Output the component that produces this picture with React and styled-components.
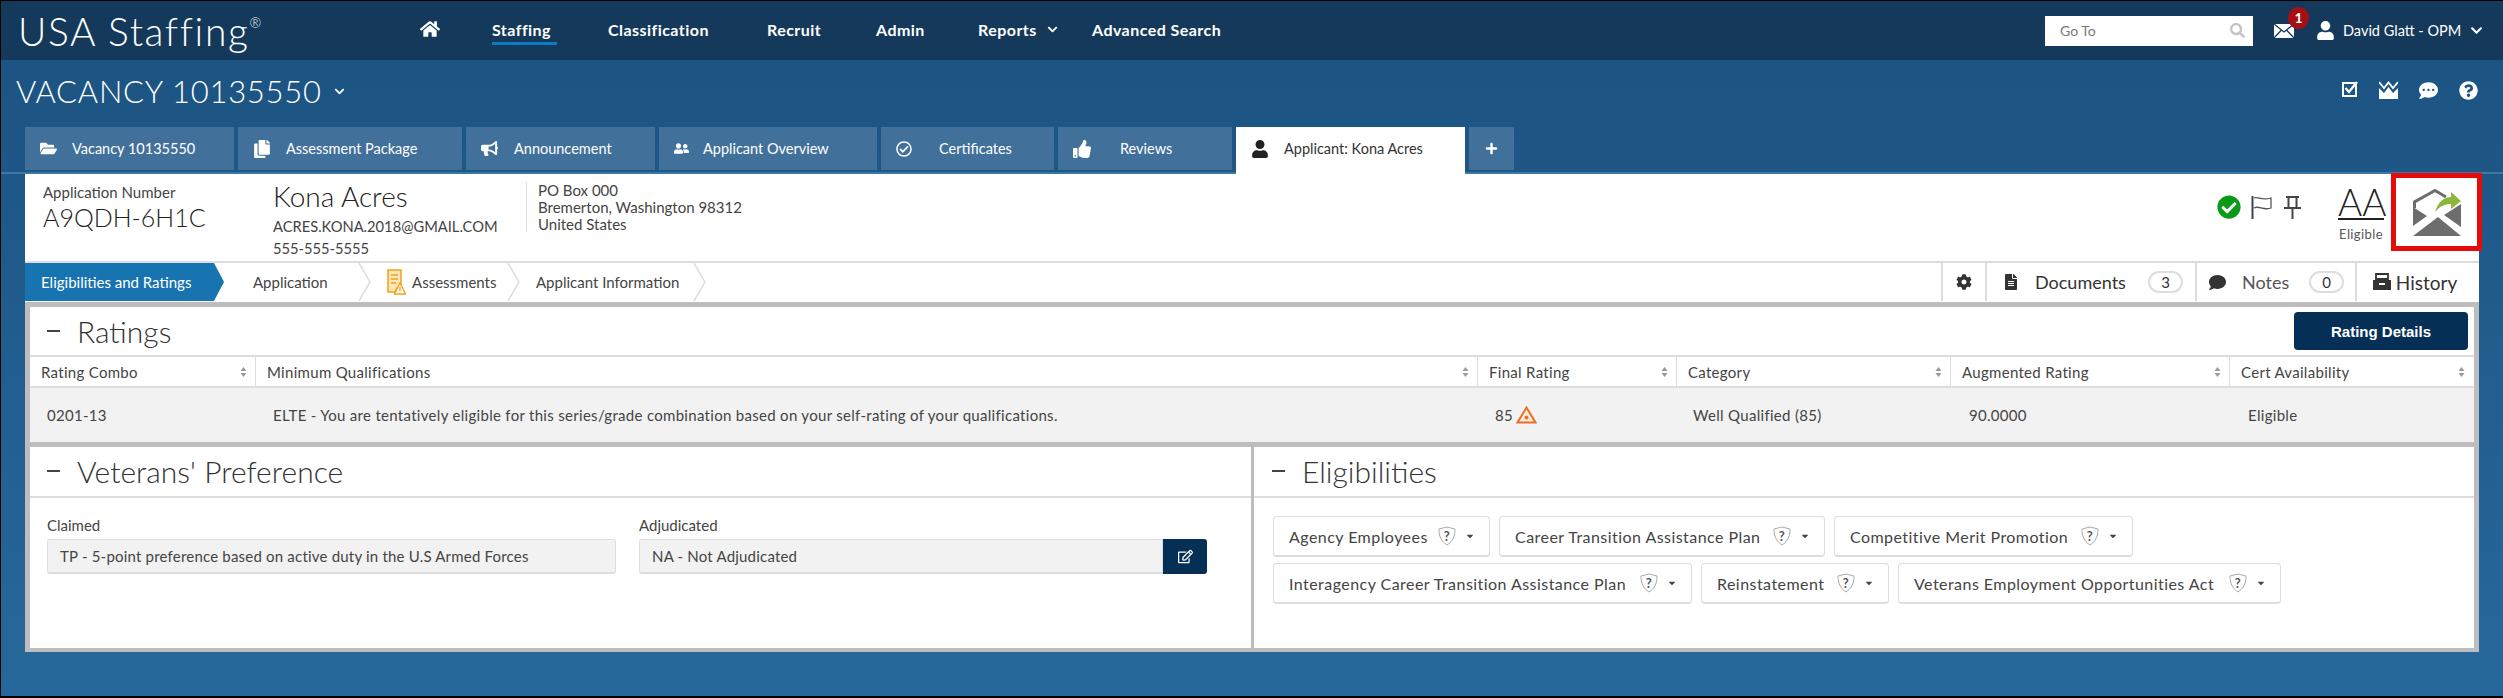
import React from 'react';
import styled, { createGlobalStyle } from 'styled-components';
import {
  FaHome, FaFolderOpen, FaCopy, FaBullhorn, FaUserFriends, FaThumbsUp, FaUser, FaPlus, FaCog,
  FaFileAlt, FaComment, FaCheckCircle, FaQuestionCircle, FaCommentDots,
  FaChevronDown, FaSearch, FaRegCheckCircle, FaCaretDown, FaRegEdit,
} from 'react-icons/fa';

const font = '"Lato", "Noto Sans", sans-serif';

const GlobalStyle = createGlobalStyle`
  html, body {
    margin: 0;
    padding: 0;
    background: #000;
    overflow: hidden;
  }
  * {
    box-sizing: border-box;
  }
`;

const Page = styled.div`
  width: 2503px;
  height: 698px;
  border-top: 1px solid #000;
  border-left: 1px solid #000;
  border-bottom: 2px solid #000;
  background: linear-gradient(180deg, #1b5280 0%, #27689b 100%);
  font-family: ${font};
  color: #333;
  display: flex;
  flex-direction: column;
  overflow: hidden;
`;

const TopBar = styled.header`
  height: 59px;
  flex: none;
  display: flex;
  align-items: center;
  background: #14395a;
  color: #fff;
`;

const Logo = styled.div`
  width: 419px;
  padding-left: 17px;
  font-size: 39px;
  font-weight: 300;
  letter-spacing: 1.6px;
  white-space: nowrap;
  sup {
    font-size: 14px;
    vertical-align: 18px;
    letter-spacing: 0;
  }
`;

const Nav = styled.nav`
  display: flex;
  align-items: center;
`;

const NavLink = styled.a`
  width: ${(p) => p.$w}px;
  margin-right: ${(p) => p.$mr || 0}px;
  height: 28px;
  font-size: 16px;
  font-weight: 700;
  letter-spacing: 0.45px;
  white-space: nowrap;
  display: flex;
  align-items: center;
  gap: 10px;
  color: #fff;
  border-bottom: ${(p) => (p.$active ? '3px solid #0a7dc0' : '3px solid transparent')};
  svg {
    flex: none;
  }
`;

const UserArea = styled.div`
  margin-left: auto;
  display: flex;
  align-items: center;
`;

const GoTo = styled.div`
  width: 208px;
  height: 30px;
  margin-right: 21px;
  padding: 0 8px 0 15px;
  background: #fff;
  color: #777;
  font-size: 14px;
  display: flex;
  align-items: center;
  justify-content: space-between;
`;

const Mail = styled.div`
  position: relative;
  width: 42px;
  height: 20px;
  display: flex;
  align-items: center;
`;

const Badge = styled.span`
  position: absolute;
  left: 14px;
  top: -14px;
  width: 21px;
  height: 22px;
  border-radius: 50%;
  background: #a40f13;
  color: #fff;
  font-size: 14px;
  font-weight: 700;
  display: flex;
  align-items: center;
  justify-content: center;
`;

const UserName = styled.div`
  width: 127px;
  margin-left: 8px;
  font-size: 14.5px;
  white-space: nowrap;
`;

const UserCaret = styled.div`
  width: 33px;
  display: flex;
`;

const TitleRow = styled.div`
  height: 67px;
  flex: none;
  padding: 0 25px 0 15px;
  display: flex;
  align-items: flex-start;
  justify-content: space-between;
  color: #fff;
`;

const Title = styled.h1`
  margin: 12px 0 0;
  font-size: 31px;
  line-height: 38px;
  font-weight: 300;
  letter-spacing: 0.75px;
  display: flex;
  align-items: center;
  gap: 12px;
`;

const QuickIcons = styled.div`
  display: flex;
  gap: 21px;
  margin-top: 21px;
  svg {
    display: block;
  }
`;

const TabBar = styled.div`
  height: 47px;
  flex: none;
  padding-left: 24px;
  display: flex;
  gap: 4px;
  align-items: flex-start;
  border-bottom: 2px solid #3b78a6;
`;

const Tab = styled.div`
  width: ${(p) => p.$w}px;
  height: ${(p) => (p.$active ? 47 : 43)}px;
  padding-left: ${(p) => (p.$center ? 0 : 15)}px;
  padding-bottom: ${(p) => (p.$active ? 4 : 0)}px;
  background: ${(p) => (p.$active ? '#fff' : '#41719b')};
  color: ${(p) => (p.$active ? '#333' : '#fff')};
  font-size: 14.5px;
  white-space: nowrap;
  display: flex;
  align-items: center;
  justify-content: ${(p) => (p.$center ? 'center' : 'flex-start')};
  svg {
    flex: none;
  }
`;

const TabIcon = styled.span`
  width: ${(p) => p.$w || 32}px;
  display: flex;
  flex: none;
`;

const Sheet = styled.main`
  width: 2454px;
  margin-left: 24px;
  background: #fff;
  display: flex;
  flex-direction: column;
`;

const ApplicantHead = styled.section`
  height: 89px;
  padding-left: 18px;
  border-bottom: 2px solid #ddd;
  display: flex;
`;

const NumberCol = styled.div`
  width: 230px;
  padding-top: 9px;
`;

const SmallLabel = styled.div`
  font-size: 15px;
  line-height: 18px;
  color: #444;
`;

const AppNumber = styled.div`
  font-size: 25px;
  line-height: 30px;
  font-weight: 300;
  margin-top: 1px;
  color: #222;
`;

const PersonCol = styled.div`
  width: 253px;
  padding-top: 6px;
`;

const PersonName = styled.div`
  font-size: 28px;
  line-height: 32px;
  font-weight: 300;
  color: #222;
`;

const PersonLine = styled.div`
  font-size: 14.7px;
  line-height: 22px;
  margin-top: ${(p) => p.$mt || 0}px;
  color: #444;
`;

const AddressCol = styled.div`
  margin-top: 8px;
  height: 50px;
  padding-left: 11px;
  border-left: 1px solid #ddd;
  font-size: 15px;
  line-height: 17px;
  color: #444;
`;

const StatusArea = styled.div`
  margin-left: auto;
  margin-right: -3px;
  display: flex;
  align-items: flex-start;
  color: #444;
`;

const StatusIcons = styled.div`
  display: flex;
  align-items: center;
  gap: 10px;
  margin-top: 21px;
  margin-right: 32px;
`;

const GradeCol = styled.div`
  width: 54px;
  margin-top: 12px;
  margin-right: 3px;
  text-align: center;
`;

const Grade = styled.div`
  font-size: 37px;
  line-height: 32px;
  font-weight: 300;
  border-bottom: 2px solid #222;
  margin: 0 4px;
  color: #222;
`;

const GradeLabel = styled.div`
  font-size: 13px;
  line-height: 16px;
  margin-top: 6px;
  color: #555;
  letter-spacing: 0.4px;
`;

const SendBox = styled.div`
  width: 91px;
  height: 78px;
  margin-top: -1px;
  border: 5px solid #e60b0b;
  display: flex;
  align-items: center;
  justify-content: center;
`;

const StepBar = styled.section`
  height: 38px;
  display: flex;
  align-items: stretch;
`;

const Step = styled.div`
  width: ${(p) => p.$w}px;
  padding-left: ${(p) => p.$pl}px;
  font-size: 15px;
  white-space: nowrap;
  display: flex;
  align-items: center;
  gap: 6px;
  color: ${(p) => (p.$active ? '#fff' : '#444')};
  background: ${(p) => (p.$active ? '#1874b0' : '#fff')};
  clip-path: ${(p) => (p.$active ? 'polygon(0 0, 189px 0, 199px 50%, 189px 100%, 0 100%)' : 'none')};
`;

const StepArrow = styled.svg`
  width: 13px;
  height: 38px;
  flex: none;
  margin-left: -13px;
`;

const RightTools = styled.div`
  margin-left: auto;
  display: flex;
`;

const Tool = styled.div`
  width: ${(p) => p.$w}px;
  padding-left: ${(p) => p.$pl}px;
  border-left: 2px solid #ddd;
  display: flex;
  align-items: center;
  font-size: ${(p) => p.$fs || 18}px;
  color: #333;
  white-space: nowrap;
`;

const ToolLabel = styled.span`
  width: ${(p) => p.$w}px;
  padding-left: 16px;
  color: ${(p) => p.$color || '#333'};
`;

const Count = styled.span`
  width: 35px;
  height: 22px;
  flex: none;
  border: 2px solid #ddd;
  border-radius: 12px;
  font-size: 15px;
  display: flex;
  align-items: center;
  justify-content: center;
  color: #333;
`;

const Content = styled.div`
  background: #bdbdbd;
  margin-top: 1px;
  padding: 5px 5px 4px;
  display: flex;
  flex-direction: column;
  gap: 5px;
`;

const Card = styled.section`
  background: #fff;
`;

const CardHead = styled.div`
  height: ${(p) => p.$h}px;
  padding: 0 ${(p) => p.$pr || 0}px ${(p) => p.$pb || 0}px ${(p) => p.$pl || 17}px;
  border-bottom: 2px solid #ddd;
  display: flex;
  align-items: center;
  justify-content: space-between;
`;

const CardTitle = styled.h2`
  margin: 0;
  font-size: 30px;
  font-weight: 300;
  color: #333;
  display: flex;
  align-items: center;
  white-space: nowrap;
  &::before {
    content: '';
    width: 13px;
    height: 2px;
    margin-right: 17px;
    background: #444;
  }
`;

const DarkButton = styled.button`
  width: 174px;
  height: 38px;
  border: none;
  border-radius: 4px;
  background: #062f55;
  color: #fff;
  font-family: "Liberation Sans", sans-serif;
  font-size: 15px;
  font-weight: 700;
`;

const GridRow = styled.div`
  display: grid;
  grid-template-columns: 225px 1222px 199px 274px 279px 244px;
  height: ${(p) => p.$h}px;
  background: ${(p) => (p.$head ? '#fff' : '#f2f2f2')};
  border-bottom: ${(p) => (p.$head ? '2px solid #ddd' : 'none')};
`;

const HeadCell = styled.div`
  padding: 0 8px 0 11px;
  border-left: ${(p) => (p.$first ? 'none' : '1px solid #ddd')};
  font-size: 15px;
  letter-spacing: 0.3px;
  color: #444;
  display: flex;
  align-items: center;
  justify-content: space-between;
  white-space: nowrap;
`;

const RowCell = styled.div`
  padding-left: ${(p) => p.$pl || 17}px;
  font-size: 15px;
  letter-spacing: 0.3px;
  color: #444;
  display: flex;
  align-items: center;
  gap: 3px;
  white-space: nowrap;
`;

const SortMark = styled.svg`
  width: 7px;
  height: 12px;
  flex: none;
`;

const TwoCards = styled.div`
  display: grid;
  grid-template-columns: 1221px 1fr;
  gap: 3px;
  height: 201px;
`;

const FieldGrid = styled.div`
  padding: 18px 0 0 17px;
  display: grid;
  grid-template-columns: 569px 568px;
  column-gap: 23px;
`;

const FieldLabel = styled.div`
  font-size: 15px;
  line-height: 19px;
  margin-bottom: 4px;
  color: #444;
`;

const ReadBox = styled.div`
  height: 35px;
  padding-left: 12px;
  background: #f2f2f2;
  border: 1px solid #ddd;
  border-bottom-width: 2px;
  border-radius: 3px;
  font-size: 15px;
  letter-spacing: 0.2px;
  color: #444;
  display: flex;
  align-items: center;
  white-space: nowrap;
`;

const InputGroup = styled.div`
  display: flex;
  ${ReadBox} {
    flex: 1;
    border-radius: 3px 0 0 3px;
  }
`;

const EditButton = styled.div`
  width: 44px;
  height: 35px;
  background: #062f55;
  border-radius: 0 3px 3px 0;
  color: #fff;
  display: flex;
  align-items: center;
  justify-content: center;
`;

const ChipArea = styled.div`
  padding: 18px 0 0 19px;
  display: flex;
  flex-direction: column;
  gap: 6px;
`;

const ChipRow = styled.div`
  display: flex;
  gap: 9px;
`;

const Chip = styled.div`
  width: ${(p) => p.$w}px;
  height: 41px;
  padding-left: 15px;
  border: 1px solid #ddd;
  border-bottom-width: 2px;
  border-radius: 4px;
  font-size: 16px;
  letter-spacing: 0.45px;
  color: #444;
  display: flex;
  align-items: center;
  white-space: nowrap;
`;

const ChipText = styled.span`
  flex: 1;
`;

const ChipIcons = styled.span`
  display: flex;
  align-items: center;
  gap: 9px;
  margin-right: 14px;
`;

function SortIcon() {
  return (
    <SortMark viewBox="0 0 7 12">
      <path d="M3.5 1 L6.5 5 H0.5 Z M3.5 11 L0.5 7 H6.5 Z" fill="#999" />
    </SortMark>
  );
}

function ShieldIcon() {
  return (
    <svg width="18" height="20" viewBox="0 0 18 20">
      <path d="M9 1 L17 3 C17 10 15 15 9 19 C3 15 1 10 1 3 Z" fill="none" stroke="#aaa" />
      <text x="9" y="14.5" fontSize="13" fontWeight="700" textAnchor="middle" fill="#555" fontFamily={font}>?</text>
    </svg>
  );
}

function Arrow() {
  return (
    <StepArrow viewBox="0 0 13 38">
      <path d="M1 0 L12 19 L1 38" fill="none" stroke="#ddd" strokeWidth="1.5" />
    </StepArrow>
  );
}

function AssessIcon() {
  return (
    <svg width="19" height="26" viewBox="0 0 19 26">
      <path d="M1 1 H14 V19 H10 L8 23 H1 Z" fill="#fbe6b4" stroke="#f0a21e" strokeWidth="1.5" />
      <path d="M4 6 H11 M4 10 H11 M4 14 H9" stroke="#f0a21e" strokeWidth="1.6" />
      <path d="M13 14 L18.5 25 H7.5 Z" fill="#fff" stroke="#f0a21e" strokeWidth="1.4" />
      <path d="M13 18 V22" stroke="#f0a21e" strokeWidth="1.4" />
    </svg>
  );
}

function WarnIcon() {
  return (
    <svg width="21" height="18" viewBox="0 0 21 18">
      <path d="M10.5 1.5 L19.5 16.5 H1.5 Z" fill="#fce9d8" stroke="#e8702a" strokeWidth="2" />
      <circle cx="10.5" cy="11.5" r="2" fill="#e8702a" />
    </svg>
  );
}

function OpenMailIcon() {
  return (
    <svg width="48" height="47" viewBox="0 0 48 47">
      <path d="M1.5 19 V13 L22 1.5 L33 8" fill="none" stroke="#6d6d6d" strokeWidth="3" />
      <path d="M0 18 V37 L14 27 Z M48 15 V38 L31 26 Z" fill="#6d6d6d" />
      <path d="M0 47 L25 28 L48 47 Z" fill="#6d6d6d" />
      <path d="M22 23 C25 13 31 8 38 8 V3 L48 12 L38 20 V15 C32 15 27 17 22 23 Z" fill="#8cb63c" />
    </svg>
  );
}

function MailIcon() {
  return (
    <svg width="20" height="14" viewBox="0 0 20 14">
      <rect width="20" height="14" fill="#fff" />
      <path d="M0 0 L10 8 L20 0 M0 14 L7.5 6 M20 14 L12.5 6" fill="none" stroke="#14395a" strokeWidth="1.3" />
    </svg>
  );
}

function CrownIcon() {
  return (
    <svg width="19" height="18" viewBox="0 0 19 18">
      <path d="M0 7 L5 12 L9.5 6 L14 12 L19 7 V18 H0 Z" fill="#fff" />
      <path d="M0 1 L5 7 L9.5 1.5 L14 7 L19 1" fill="none" stroke="#fff" strokeWidth="1.8" />
    </svg>
  );
}

function FlagIcon() {
  return (
    <svg width="22" height="23" viewBox="0 0 22 23">
      <path d="M1.5 0 V23" stroke="#345" strokeWidth="2" />
      <path d="M3 2 C7 0 10 5 20 2 V12 C12 15 8 9 3 12" fill="none" stroke="#555" strokeWidth="1.3" />
    </svg>
  );
}

function PinIcon() {
  return (
    <svg width="19" height="23" viewBox="0 0 19 23">
      <path d="M3 1 H16 M5.5 1 V11 M13.5 1 V11 M1 12 H18 M9.5 12 V23" fill="none" stroke="#444" strokeWidth="2" />
    </svg>
  );
}

function HistoryIcon() {
  return (
    <svg width="18" height="18" viewBox="0 0 18 18">
      <path d="M3 1 H15 V6 H3 Z" fill="none" stroke="#333" strokeWidth="1.8" />
      <path d="M0 7 H18 V17 H0 Z" fill="#333" />
      <rect x="6" y="10" width="6" height="2" fill="#fff" />
    </svg>
  );
}

function CheckSquareIcon() {
  return (
    <svg width="16" height="16" viewBox="0 0 16 16">
      <rect x="1" y="2" width="13" height="13" fill="none" stroke="#fff" strokeWidth="2" />
      <path d="M3.5 7 L7 11 L15 1" fill="none" stroke="#fff" strokeWidth="2.4" />
    </svg>
  );
}

const tabs = [
  { label: 'Vacancy 10135550', w: 209, icon: <FaFolderOpen size={17} /> },
  { label: 'Assessment Package', w: 224, icon: <FaCopy size={18} />, iw: 33 },
  { label: 'Announcement', w: 189, icon: <FaBullhorn size={17} />, iw: 33 },
  { label: 'Applicant Overview', w: 218, icon: <FaUserFriends size={15} />, iw: 29 },
  { label: 'Certificates', w: 173, icon: <FaRegCheckCircle size={16} />, iw: 43 },
  { label: 'Reviews', w: 174, icon: <FaThumbsUp size={18} />, iw: 47 },
];

const chipsTop = [
  { label: 'Agency Employees', w: 217 },
  { label: 'Career Transition Assistance Plan', w: 326 },
  { label: 'Competitive Merit Promotion', w: 299 },
];

const chipsBottom = [
  { label: 'Interagency Career Transition Assistance Plan', w: 419 },
  { label: 'Reinstatement', w: 188 },
  { label: 'Veterans Employment Opportunities Act', w: 383 },
];

function EligibilityChip({ label, w }) {
  return (
    <Chip $w={w}>
      <ChipText>{label}</ChipText>
      <ChipIcons>
        <ShieldIcon />
        <FaCaretDown size={10} color="#444" />
      </ChipIcons>
    </Chip>
  );
}

export default function App() {
  return (
    <Page>
      <GlobalStyle />
      <TopBar>
        <Logo>USA Staffing<sup>®</sup></Logo>
        <Nav>
          <NavLink $w={72}><FaHome size={20} /></NavLink>
          <NavLink $w={65} $mr={51} $active>Staffing</NavLink>
          <NavLink $w={159}>Classification</NavLink>
          <NavLink $w={109}>Recruit</NavLink>
          <NavLink $w={102}>Admin</NavLink>
          <NavLink $w={114}>Reports <FaChevronDown size={11} /></NavLink>
          <NavLink $w={140}>Advanced Search</NavLink>
        </Nav>
        <UserArea>
          <GoTo>Go To<FaSearch size={15} color="#c4c4c4" /></GoTo>
          <Mail>
            <MailIcon />
            <Badge>1</Badge>
          </Mail>
          <FaUser size={19} />
          <UserName>David Glatt - OPM</UserName>
          <UserCaret><FaChevronDown size={13} /></UserCaret>
        </UserArea>
      </TopBar>

      <TitleRow>
        <Title>VACANCY 10135550 <FaChevronDown size={11} /></Title>
        <QuickIcons>
          <CheckSquareIcon />
          <CrownIcon />
          <FaCommentDots size={19} />
          <FaQuestionCircle size={19} />
        </QuickIcons>
      </TitleRow>

      <TabBar>
        {tabs.map((t) => (
          <Tab key={t.label} $w={t.w}>
            <TabIcon $w={t.iw}>{t.icon}</TabIcon>
            {t.label}
          </Tab>
        ))}
        <Tab $w={229} $active>
          <TabIcon $w={33}><FaUser size={18} color="#222" /></TabIcon>
          Applicant: Kona Acres
        </Tab>
        <Tab $w={45} $center><FaPlus size={13} /></Tab>
      </TabBar>

      <Sheet>
        <ApplicantHead>
          <NumberCol>
            <SmallLabel>Application Number</SmallLabel>
            <AppNumber>A9QDH-6H1C</AppNumber>
          </NumberCol>
          <PersonCol>
            <PersonName>Kona Acres</PersonName>
            <PersonLine $mt={3}>ACRES.KONA.2018@GMAIL.COM</PersonLine>
            <PersonLine>555-555-5555</PersonLine>
          </PersonCol>
          <AddressCol>
            PO Box 000<br />
            Bremerton, Washington 98312<br />
            United States
          </AddressCol>
          <StatusArea>
            <StatusIcons>
              <FaCheckCircle size={24} color="#0a9a16" />
              <FlagIcon />
              <PinIcon />
            </StatusIcons>
            <GradeCol>
              <Grade>AA</Grade>
              <GradeLabel>Eligible</GradeLabel>
            </GradeCol>
            <SendBox><OpenMailIcon /></SendBox>
          </StatusArea>
        </ApplicantHead>

        <StepBar>
          <Step $w={199} $pl={16} $active>Eligibilities and Ratings</Step>
          <Step $w={147} $pl={29}>Application</Step>
          <Arrow />
          <Step $w={149} $pl={16}><AssessIcon />Assessments</Step>
          <Arrow />
          <Step $w={186} $pl={16}>Applicant Information</Step>
          <Arrow />
          <RightTools>
            <Tool $w={44} $pl={13}><FaCog size={16} /></Tool>
            <Tool $w={210} $pl={16}>
              <FaFileAlt size={16} />
              <ToolLabel $w={129}>Documents</ToolLabel>
              <Count>3</Count>
            </Tool>
            <Tool $w={160} $pl={12}>
              <FaComment size={17} />
              <ToolLabel $w={83} $color="#555">Notes</ToolLabel>
              <Count>0</Count>
            </Tool>
            <Tool $w={124} $pl={16} $fs={19}>
              <HistoryIcon />&nbsp;History
            </Tool>
          </RightTools>
        </StepBar>

        <Content>
          <Card>
            <CardHead $h={50} $pr={6}>
              <CardTitle>Ratings</CardTitle>
              <DarkButton>Rating Details</DarkButton>
            </CardHead>
            <GridRow $head $h={31}>
              <HeadCell $first>Rating Combo<SortIcon /></HeadCell>
              <HeadCell>Minimum Qualifications<SortIcon /></HeadCell>
              <HeadCell>Final Rating<SortIcon /></HeadCell>
              <HeadCell>Category<SortIcon /></HeadCell>
              <HeadCell>Augmented Rating<SortIcon /></HeadCell>
              <HeadCell>Cert Availability<SortIcon /></HeadCell>
            </GridRow>
            <GridRow $h={54}>
              <RowCell>0201-13</RowCell>
              <RowCell $pl={18}>ELTE - You are tentatively eligible for this series/grade combination based on your self-rating of your qualifications.</RowCell>
              <RowCell $pl={18}>85 <WarnIcon /></RowCell>
              <RowCell $pl={17}>Well Qualified (85)</RowCell>
              <RowCell $pl={19}>90.0000</RowCell>
              <RowCell $pl={19}>Eligible</RowCell>
            </GridRow>
          </Card>

          <TwoCards>
            <Card>
              <CardHead $h={51} $pb={2}>
                <CardTitle>Veterans' Preference</CardTitle>
              </CardHead>
              <FieldGrid>
                <div>
                  <FieldLabel>Claimed</FieldLabel>
                  <ReadBox>TP - 5-point preference based on active duty in the U.S Armed Forces</ReadBox>
                </div>
                <div>
                  <FieldLabel>Adjudicated</FieldLabel>
                  <InputGroup>
                    <ReadBox>NA - Not Adjudicated</ReadBox>
                    <EditButton><FaRegEdit size={15} /></EditButton>
                  </InputGroup>
                </div>
              </FieldGrid>
            </Card>
            <Card>
              <CardHead $h={51} $pl={18} $pb={2}>
                <CardTitle>Eligibilities</CardTitle>
              </CardHead>
              <ChipArea>
                <ChipRow>{chipsTop.map((c) => <EligibilityChip key={c.label} {...c} />)}</ChipRow>
                <ChipRow>{chipsBottom.map((c) => <EligibilityChip key={c.label} {...c} />)}</ChipRow>
              </ChipArea>
            </Card>
          </TwoCards>
        </Content>
      </Sheet>
    </Page>
  );
}
